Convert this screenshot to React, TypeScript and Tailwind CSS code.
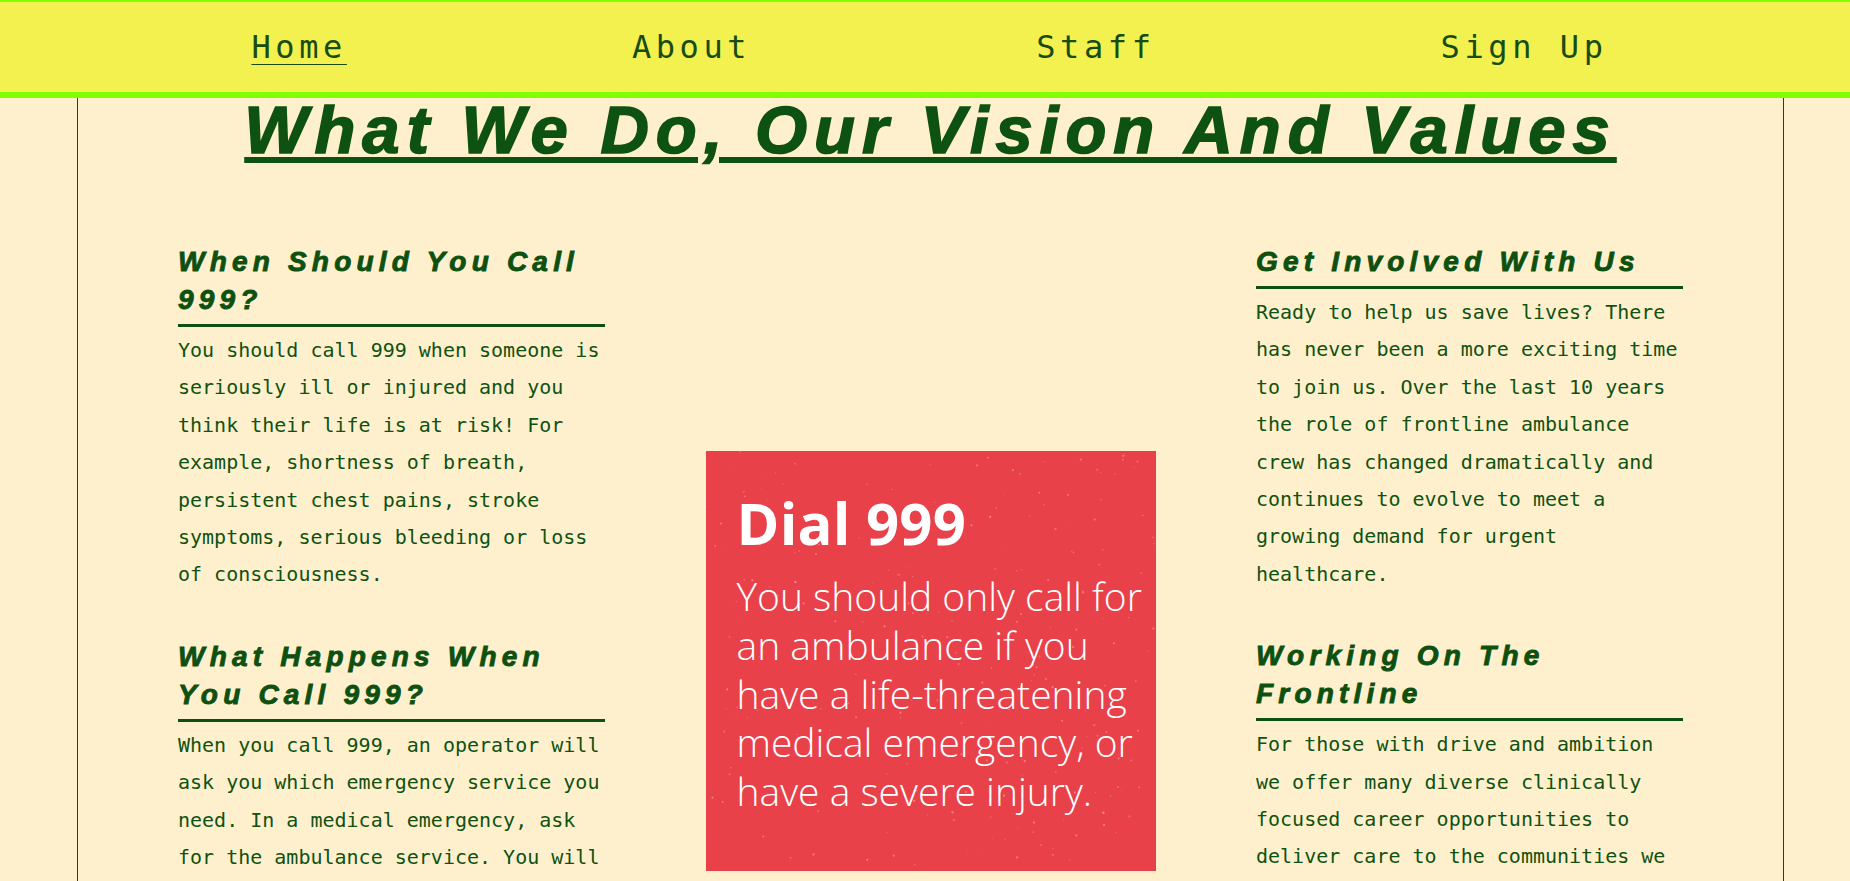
import React from "react";

const NAV = ["Home", "About", "Staff", "Sign Up"];

function Section({
  title,
  children,
}: {
  title: string;
  children: React.ReactNode;
}) {
  return (
    <section>
      <h2 className="font-['Liberation_Sans',Arial,sans-serif] font-bold italic text-[28px] leading-[38px] tracking-[5.2px] text-[#0d5010] [-webkit-text-stroke:0.9px_#0d5010] border-b-[3px] border-[#0d5010] pb-[5px]">
        {title}
      </h2>
      <p className="mt-[5px] font-['DejaVu_Sans_Mono',monospace] text-[20px] leading-[37.4px] text-[#0f5212]">
        {children}
      </p>
    </section>
  );
}

function Specks() {
  let seed = 7;
  const rnd = () => {
    seed = (seed * 16807) % 2147483647;
    return seed / 2147483647;
  };
  const items = Array.from({ length: 260 }, () => ({
    x: rnd() * 450,
    y: rnd() * 420,
    r: 0.4 + rnd() * 0.8,
    o: 0.12 + rnd() * 0.25,
  }));
  return (
    <svg
      className="absolute inset-0 pointer-events-none"
      width="450"
      height="420"
      viewBox="0 0 450 420"
    >
      {items.map((s, i) => (
        <circle key={i} cx={s.x} cy={s.y} r={s.r} fill="#ffffff" opacity={s.o} />
      ))}
    </svg>
  );
}

export default function App() {
  return (
    <div className="min-h-screen bg-[#fff0cd]">
      <nav className="h-[98px] bg-[#f2f14f] border-t-2 border-b-[6px] border-[#80ff00] flex items-center justify-center gap-[285px] pl-[9px]">
        {NAV.map((n, i) => (
          <a
            key={n}
            href="#"
            className={
              i === 0
                ? "font-['DejaVu_Sans_Mono',monospace] text-[32px] tracking-[4.6px] text-[#174d12] underline underline-offset-[6px] decoration-1 whitespace-nowrap"
                : "font-['DejaVu_Sans_Mono',monospace] text-[32px] tracking-[4.6px] text-[#174d12] no-underline whitespace-nowrap"
            }
          >
            {n}
          </a>
        ))}
      </nav>

      <main className="ml-[77px] w-[1707px] border-x border-[#0d5010] min-h-[783px]">
        <h1 className="text-center font-['Liberation_Sans',Arial,sans-serif] font-bold italic text-[67px] leading-[64px] tracking-[7px] text-[#0e5212] [-webkit-text-stroke:1.6px_#0e5212] underline decoration-[6px] underline-offset-[4px]">
          What We Do, Our Vision And Values
        </h1>

        <div className="flex justify-between px-[100px] mt-[81px] items-start">
          <div className="w-[427px] flex flex-col gap-[44px]">
            <Section title="When Should You Call 999?">
              You should call 999 when someone is seriously ill or injured and
              you think their life is at risk! For example, shortness of
              breath, persistent chest pains, stroke symptoms, serious bleeding
              or loss of consciousness.
            </Section>
            <Section title="What Happens When You Call 999?">
              When you call 999, an operator will ask you which emergency
              service you need. In a medical emergency, ask for the ambulance
              service. You will then be put through to the ambulance control
              room where a call handler will ask you questions.
            </Section>
          </div>

          <div className="relative w-[450px] h-[420px] mt-[208px] bg-[#e8414a] pl-[31px] pt-[40px] text-white overflow-hidden">
            <Specks />
            <div className="relative font-['Open_Sans','Noto_Sans',sans-serif] font-bold text-[58px] leading-[64px] tracking-[0.2px]">
              Dial 999
            </div>
            <div className="relative mt-[17px] font-['Open_Sans','Noto_Sans',sans-serif] font-light text-[39px] leading-[48.8px]">
              You should only call for
              <br />
              an ambulance if you
              <br />
              have a life-threatening
              <br />
              medical emergency, or
              <br />
              have a severe injury.
            </div>
          </div>

          <div className="w-[427px] flex flex-col gap-[44px]">
            <Section title="Get Involved With Us">
              Ready to help us save lives? There has never been a more exciting
              time to join us. Over the last 10 years the role of frontline
              ambulance crew has changed dramatically and continues to evolve
              to meet a growing demand for urgent healthcare.
            </Section>
            <Section title="Working On The Frontline">
              For those with drive and ambition we offer many diverse
              clinically focused career opportunities to deliver care to the
              communities we serve, working across a wide range of settings.
            </Section>
          </div>
        </div>
      </main>
    </div>
  );
}
